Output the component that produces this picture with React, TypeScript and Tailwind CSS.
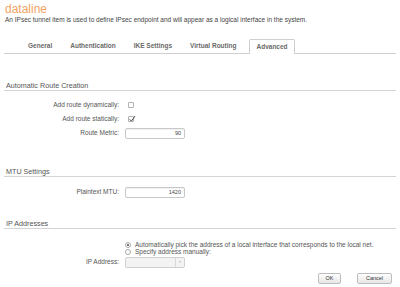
import React from "react";

const Row = ({ label, children, h = "h-[14px]", mt = "" }: { label: string; children?: React.ReactNode; h?: string; mt?: string }) => (
  <div className={`flex items-center ${h} ${mt}`}>
    <div className="w-[115px] text-right text-[6.5px] leading-[8px] text-[#555]">{label}</div>
    <div className="ml-[6px] flex items-center">{children}</div>
  </div>
);

const Section = ({ title, mt }: { title: string; mt: string }) => (
  <div className={`${mt} h-[10px] border-b border-[#d4d4d4] pl-[2px] text-[7.2px] leading-[9px] text-[#555]`}>{title}</div>
);

const TextInput = ({ value }: { value: string }) => (
  <div className="flex h-[11px] w-[60px] items-center justify-end rounded-[2px] border border-[#c8c8c8] bg-white pr-[3px] text-[5.5px] text-[#444] shadow-[inset_0_1px_1px_rgba(0,0,0,0.06)]">
    {value}
  </div>
);

export default function App() {
  const tabs = ["General", "Authentication", "IKE Settings", "Virtual Routing"];
  return (
    <div className="h-[287px] w-[400px] overflow-hidden bg-white px-[4px]" style={{ fontFamily: '"Liberation Sans", Arial, sans-serif' }}>
      <div className="mt-[3px] h-[12px] pl-[1px] text-[12px] leading-[12px] text-[#f2a463]">dataline</div>
      <div className="mt-[1px] h-[8px] pl-[1px] text-[6.5px] leading-[8px] text-[#444]">
        An IPsec tunnel item is used to define IPsec endpoint and will appear as a logical interface in the system.
      </div>
      <div className="mt-[15px] flex h-[15px] items-end border-b border-[#cfcfcf] pl-[15px]">
        {tabs.map((t) => (
          <div key={t} className="flex h-[14px] items-center px-[9px] text-[6.5px] font-bold text-[#6a6a6a]">
            {t}
          </div>
        ))}
        <div className="-mb-px ml-[4px] flex h-[15px] items-center rounded-t-[2px] border border-b-0 border-[#cfcfcf] bg-white px-[6px] pb-[1px] text-[6.5px] font-bold text-[#6a6a6a]">
          Advanced
        </div>
      </div>

      <Section title="Automatic Route Creation" mt="mt-[27px]" />
      <Row label="Add route dynamically:" mt="mt-[7px]">
        <div className="ml-[3px] h-[6px] w-[6px] rounded-[1px] border border-[#b0b0b0] bg-white" />
      </Row>
      <Row label="Add route statically:">
        <div className="relative ml-[3px] h-[6px] w-[6px] rounded-[1px] border border-[#b0b0b0] bg-white">
          <svg viewBox="0 0 10 10" className="absolute left-[0px] top-[-1px] h-[6px] w-[6px] overflow-visible">
            <path d="M1 5.5 L4 8.5 L10 0" fill="none" stroke="#444" strokeWidth="1.6" />
          </svg>
        </div>
      </Row>
      <Row label="Route Metric:">
        <TextInput value="90" />
      </Row>

      <Section title="MTU Settings" mt="mt-[27px]" />
      <Row label="Plaintext MTU:" mt="mt-[8px]">
        <TextInput value="1420" />
      </Row>

      <Section title="IP Addresses" mt="mt-[20px]" />
      <div className="mt-[12px] flex h-[7px] items-center pl-[121px]">
        <div className="flex h-[6px] w-[6px] items-center justify-center rounded-full border border-[#aaa] bg-white">
          <div className="h-[2px] w-[2px] rounded-full bg-[#444]" />
        </div>
        <span className="ml-[4px] text-[6.5px] leading-[7px] text-[#555]">
          Automatically pick the address of a local interface that corresponds to the local net.
        </span>
      </div>
      <div className="flex h-[7px] items-center pl-[121px]">
        <div className="h-[6px] w-[6px] rounded-full border border-[#aaa] bg-white" />
        <span className="ml-[4px] text-[6.5px] leading-[7px] text-[#555]">Specify address manually:</span>
      </div>
      <Row label="IP Address:" h="h-[12px]" mt="mt-[1px]">
        <div className="flex h-[11px] w-[60px] items-center justify-end rounded-[2px] border border-[#d0d0d0] bg-[#f3f3f3]">
          <div className="flex h-full w-[9px] items-center justify-center border-l border-[#d8d8d8]">
            <div className="h-0 w-0 border-x-[1.5px] border-t-[2px] border-x-transparent border-t-[#bbb]" />
          </div>
        </div>
      </Row>
      <div className="mt-[5px] flex justify-end gap-[16px] pr-[4px]">
        <div className="flex h-[11px] w-[23px] items-center justify-center rounded-[2px] border border-[#bdbdbd] bg-gradient-to-b from-white to-[#e6e6e6] text-[5.5px] text-[#333]">
          OK
        </div>
        <div className="flex h-[11px] w-[35px] items-center justify-center rounded-[2px] border border-[#bdbdbd] bg-gradient-to-b from-white to-[#e6e6e6] text-[5.5px] text-[#333]">
          Cancel
        </div>
      </div>
    </div>
  );
}
